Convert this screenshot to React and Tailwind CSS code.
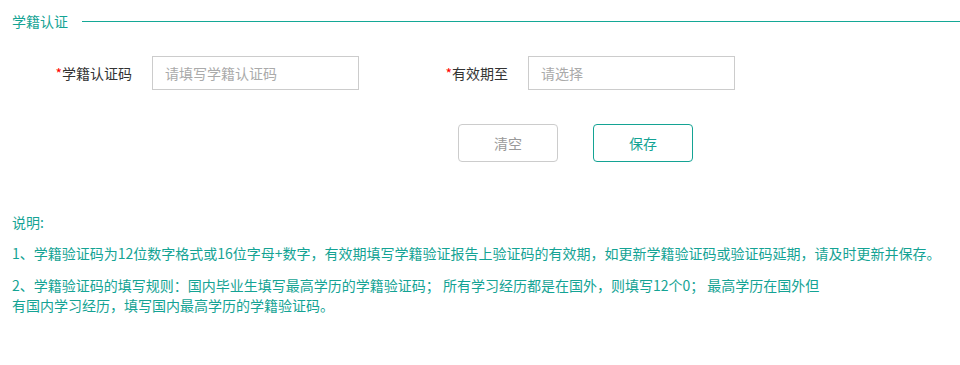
import React from 'react';

const font = { fontFamily: '"Noto Sans CJK SC", "Liberation Sans", sans-serif' };

function Field({ label, placeholder }) {
  return (
    <div className="flex items-center w-[376px]">
      <label className="w-[120px] text-right text-[14px] text-[#333]">
        <span className="text-[#f00]">*</span>
        {label}
      </label>
      <input
        readOnly
        placeholder={placeholder}
        className="ml-[20px] w-[207px] h-[34px] border border-[#ccc] px-3 text-[14px] text-[#333] placeholder:text-[#aaa] outline-none"
      />
    </div>
  );
}

export default function App() {
  return (
    <div className="w-[960px] h-[365px] bg-white overflow-hidden" style={font}>
      {/* 标题 */}
      <div className="flex items-center pl-3 pt-[11px]">
        <span className="text-[14px] leading-[20px] text-[#14a394]">学籍认证</span>
        <div className="flex-1 h-px bg-[#14a896] ml-[14px]" />
      </div>

      {/* 表单 */}
      <div className="flex pl-3 mt-[25px]">
        <Field label="学籍认证码" placeholder="请填写学籍认证码" />
        <Field label="有效期至" placeholder="请选择" />
      </div>

      <div className="flex gap-[35px] pl-[458px] mt-[34px]">
        <button className="w-[100px] h-[38px] rounded border border-[#ccc] text-[14px] text-[#999] bg-white">
          清空
        </button>
        <button className="w-[100px] h-[38px] rounded border border-[#14a394] text-[14px] text-[#14a394] bg-white">
          保存
        </button>
      </div>

      {/* 说明 */}
      <div className="pl-3 mt-[50px] text-[14px] leading-[20px] text-[#14a394]">
        <p>说明:</p>
        <p className="mt-[11px]">
          1、学籍验证码为12位数字格式或16位字母+数字，有效期填写学籍验证报告上验证码的有效期，如更新学籍验证码或验证码延期，请及时更新并保存。
        </p>
        <p className="mt-[12px]">
          2、学籍验证码的填写规则：国内毕业生填写最高学历的学籍验证码； 所有学习经历都是在国外，则填写12个0； 最高学历在国外但
          <br />
          有国内学习经历，填写国内最高学历的学籍验证码。
        </p>
      </div>
    </div>
  );
}
